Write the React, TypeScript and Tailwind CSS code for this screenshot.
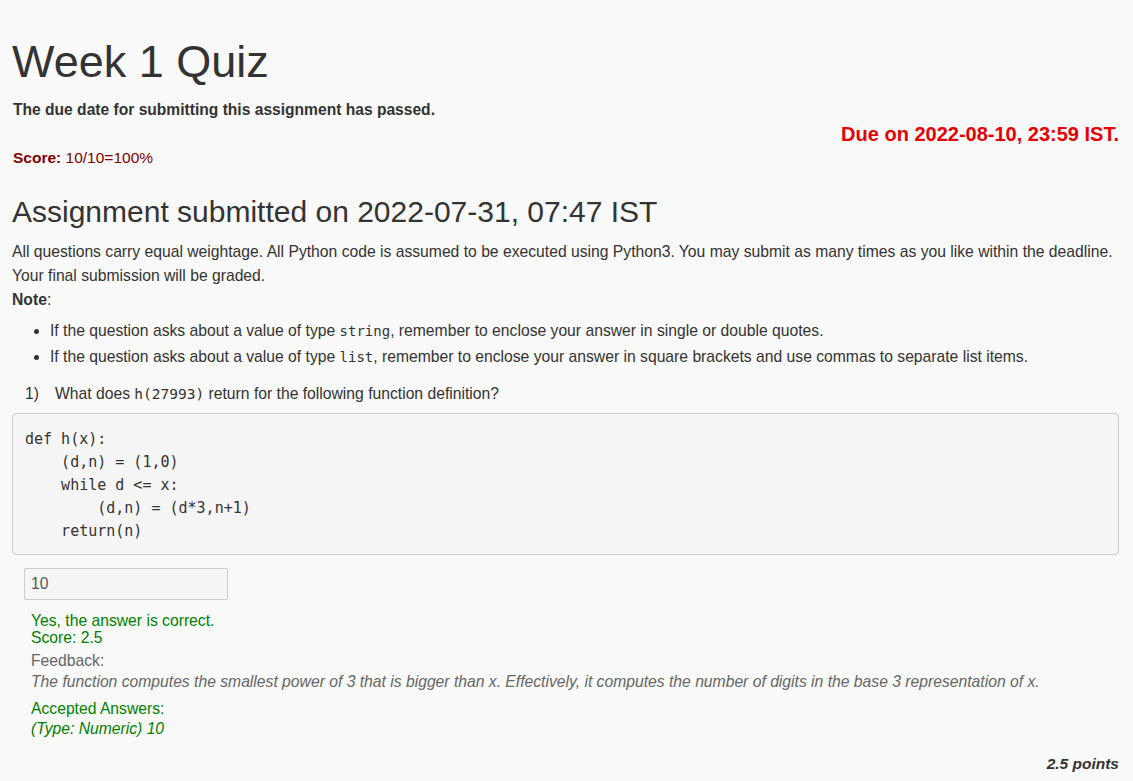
import React from 'react';

const codeLines = [
    'def h(x):',
    '    (d,n) = (1,0)',
    '    while d <= x:',
    '        (d,n) = (d*3,n+1)',
    '    return(n)',
];

export default function App() {
    return (
        <div className="min-h-screen bg-[#f9f9f9] text-[#333] font-['Liberation_Sans',Arial,sans-serif] pt-[37px]">
            <div className="pl-[12px] pr-[14px] pb-[6px]">
                {/* ENCABEZADO */}
                <h1 className="text-[45px] leading-[50px] font-normal">Week 1 Quiz</h1>
                <p className="mt-[13px] text-[15.6px] leading-[20px] font-bold pl-[1px]">The due date for submitting this assignment has passed.</p>
                <div className="mt-[3px] text-right text-[20px] leading-[22px] font-bold text-[#e60000]">Due on 2022-08-10, 23:59 IST.</div>
                <div className="mt-[3px] text-[15.5px] leading-[20px] text-[#800000] pl-[1px]">
                    <span className="font-bold">Score:</span> 10/10=100%
                </div>

                <h2 className="mt-[26px] text-[30px] leading-[36px] font-normal">Assignment submitted on 2022-07-31, 07:47 IST</h2>

                {/* INSTRUCCIONES */}
                <div className="mt-[10px] text-[15.7px] leading-[24px]">
                    All questions carry equal weightage. All Python code is assumed to be executed using Python3. You may submit as many times as you like within the deadline. Your final submission will be graded.
                    <br />
                    <span className="font-bold">Note</span>:
                </div>
                <ul className="mt-[6px] pl-[38px] list-disc text-[15.7px] leading-[25px]">
                    <li>
                        If the question asks about a value of type <code className="font-['DejaVu_Sans_Mono',monospace] text-[14px]">string</code>, remember to enclose your answer in single or double quotes.
                    </li>
                    <li>
                        If the question asks about a value of type <code className="font-['DejaVu_Sans_Mono',monospace] text-[14px]">list</code>, remember to enclose your answer in square brackets and use commas to separate list items.
                    </li>
                </ul>

                {/* PREGUNTA */}
                <div className="mt-[12px] flex text-[15.7px] leading-[24px] pl-[13px]">
                    <span className="w-[30px]">1)</span>
                    <span>
                        What does <code className="font-['DejaVu_Sans_Mono',monospace] text-[14.5px]">h(27993)</code> return for the following function definition?
                    </span>
                </div>
                <pre className="mt-[7px] rounded border border-[#ccc] bg-[#f5f5f5] px-[12px] pt-[14px] pb-[11px] font-['DejaVu_Sans_Mono',monospace] text-[15px] leading-[23px] text-[#333]">
                    {codeLines.join('\n')}
                </pre>

                <div className="ml-[12px] mt-[13px] w-[204px] h-[32px] border border-[#ccc] rounded-[2px] bg-[#f5f5f5] px-[6px] text-[15.7px] leading-[30px] text-[#555]">10</div>

                {/* RESULTADO */}
                <div className="ml-[19px] mt-[12px] text-[15.7px] leading-[17px] text-[#008000]">
                    <div>Yes, the answer is correct.</div>
                    <div>Score: 2.5</div>
                </div>
                <div className="ml-[19px] mt-[4px] text-[15.7px] leading-[21px] text-[#666]">
                    <div>Feedback:</div>
                    <div className="italic">The function computes the smallest power of 3 that is bigger than x. Effectively, it computes the number of digits in the base 3 representation of x.</div>
                </div>
                <div className="ml-[19px] mt-[7px] text-[15.7px] leading-[20px] text-[#008000]">
                    <div>Accepted Answers:</div>
                    <div className="italic">(Type: Numeric) 10</div>
                </div>

                <div className="mt-[15px] text-right text-[15.5px] leading-[20px] font-bold italic">2.5 points</div>
            </div>
        </div>
    );
}
